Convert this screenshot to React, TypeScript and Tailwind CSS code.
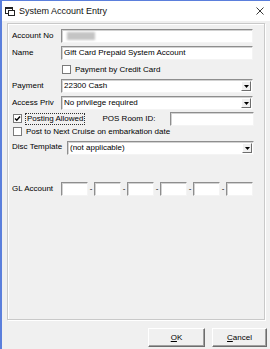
import React from 'react';

const sunken =
  'bg-white border border-t-[#8e8e8e] border-l-[#8e8e8e] border-b-[#f4f4f4] border-r-[#f4f4f4] shadow-[inset_1px_1px_0_#d2d2d2]';

function TextBox({ className = '', children }: { className?: string; children?: React.ReactNode }) {
  return <div className={`${sunken} h-[14px] flex items-center pl-[2px] overflow-hidden whitespace-nowrap ${className}`}>{children}</div>;
}

function Combo({ className = '', value }: { className?: string; value: string }) {
  return (
    <div className={`${sunken} h-[14px] flex items-center pl-[2px] pr-[1px] ${className}`}>
      <span className="flex-1 whitespace-nowrap overflow-hidden">{value}</span>
      <div className="w-[10px] h-[10px] bg-[#f0f0f0] border border-t-white border-l-white border-b-[#6d6d6d] border-r-[#6d6d6d] flex items-center justify-center">
        <svg width="5" height="3" viewBox="0 0 5 3">
          <path d="M0 0h5L2.5 3z" fill="#000" />
        </svg>
      </div>
    </div>
  );
}

function Check({ checked = false }: { checked?: boolean }) {
  return (
    <div className="w-[9px] h-[9px] bg-white border border-[#7a7a7a] flex items-center justify-center shrink-0">
      {checked && (
        <svg width="7" height="7" viewBox="0 0 7 7">
          <path d="M1 3.5l1.8 1.8L6 1.5" stroke="#000" strokeWidth="1.4" fill="none" />
        </svg>
      )}
    </div>
  );
}

export default function App() {
  return (
    <div className="w-[270px] h-[349px] bg-[#f0f0f0] border-l-2 border-t border-[#5b7fdc] flex flex-col overflow-hidden font-['Liberation_Sans',Arial,sans-serif] text-[8px] text-black leading-none">
      {/* title bar */}
      <div className="h-[20px] bg-white flex items-center pl-[3px] pr-[6px] shrink-0">
        <svg width="10" height="9" viewBox="0 0 10 9" className="mr-[4px]">
          <rect x="0.5" y="0.5" width="7" height="6" fill="#fff" stroke="#222" />
          <rect x="0.5" y="0.5" width="7" height="1.5" fill="#222" />
          <rect x="3.5" y="3.5" width="6" height="5" fill="#fff" stroke="#222" />
        </svg>
        <span className="flex-1 text-[9px] text-[#111]">System Account Entry</span>
        <svg width="8" height="8" viewBox="0 0 8 8">
          <path d="M0.5 0.5l7 7M7.5 0.5l-7 7" stroke="#222" strokeWidth="0.9" />
        </svg>
      </div>

      {/* group box */}
      <div className="ml-[5px] mt-[2px] w-[258px] h-[297px] border border-[#c9c9c9] shadow-[inset_1px_1px_0_#fff,1px_1px_0_#fff] pl-[4px] pt-[5px] flex flex-col">
        <div className="flex items-center h-[14px]">
          <span className="w-[49px]">Account No</span>
          <TextBox className="w-[192px]">
            <div className="ml-[3px] w-[28px] h-[8px] bg-[#c4c4c4] blur-[1px]" />
          </TextBox>
        </div>

        <div className="flex items-center h-[14px] mt-[3px]">
          <span className="w-[49px]">Name</span>
          <TextBox className="w-[192px]">Gift Card Prepaid System Account</TextBox>
        </div>

        <div className="flex items-center h-[13px] mt-[3px] pl-[50px] gap-[4px]">
          <Check />
          <span>Payment by Credit Card</span>
        </div>

        <div className="flex items-center h-[14px] mt-[3px]">
          <span className="w-[49px]">Payment</span>
          <Combo className="w-[192px]" value="22300  Cash" />
        </div>

        <div className="flex items-center h-[14px] mt-[3px]">
          <span className="w-[49px]">Access Priv</span>
          <Combo className="w-[192px]" value="No privilege required" />
        </div>

        <div className="flex items-center h-[13px] mt-[2px]">
          <div className="pl-[1px]">
            <Check checked />
          </div>
          <span className="ml-[3px] border border-dotted border-[#333] px-[1px] h-[12px] flex items-center">Posting Allowed</span>
          <span className="ml-[17px] w-[68px]">POS Room ID:</span>
          <TextBox className="w-[84px] h-[12px]" />
        </div>

        <div className="flex items-center h-[11px] mt-[1px] pl-[1px] gap-[4px]">
          <Check />
          <span>Post to Next Cruise on embarkation date</span>
        </div>

        <div className="flex items-start h-[14px] mt-[4px]">
          <span className="w-[55px] pt-[2px]">Disc Template</span>
          <Combo className="w-[187px]" value="(not applicable)" />
        </div>

        <div className="flex items-center h-[14px] mt-[27px]">
          <span className="w-[49px]">GL Account</span>
          {[0, 1, 2, 3, 4, 5].map((i) => (
            <React.Fragment key={i}>
              {i > 0 && <span className="w-[6px] text-center">-</span>}
              <TextBox className="w-[27px]" />
            </React.Fragment>
          ))}
        </div>
      </div>

      {/* buttons */}
      <div className="flex justify-end gap-[7px] mt-[8px] pr-[3px]">
        <button className="w-[57px] h-[19px] bg-[#f0f0f0] border border-t-white border-l-white border-b-[#6d6d6d] border-r-[#6d6d6d] shadow-[inset_-1px_-1px_0_#a0a0a0] text-[8px] flex items-center justify-center">
          <span><u>O</u>K</span>
        </button>
        <button className="w-[55px] h-[19px] bg-[#f0f0f0] border border-t-white border-l-white border-b-[#6d6d6d] border-r-[#6d6d6d] shadow-[inset_-1px_-1px_0_#a0a0a0] text-[8px] flex items-center justify-center">
          <span><u>C</u>ancel</span>
        </button>
      </div>
    </div>
  );
}
